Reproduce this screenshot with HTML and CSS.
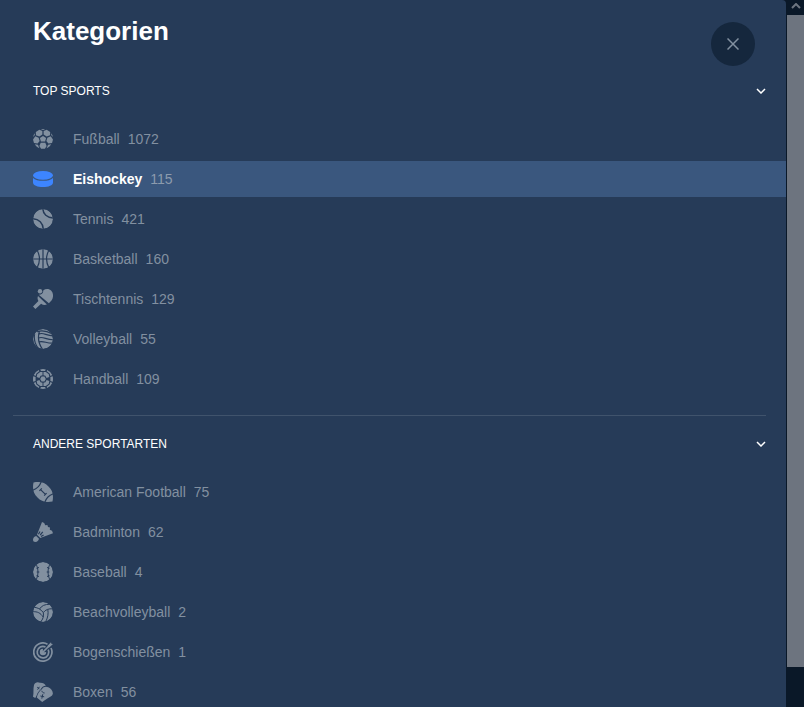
FILE: index.html
```html
<!DOCTYPE html>
<html lang="de" dir="ltr">
  <head>
    <meta charset="utf-8">
    <title>Kategorien</title>
    <link rel="stylesheet" href="styles.css">
  </head>
  <body>
    <div class="page">
      <main class="panel">
        <header class="panel-header">
          <h1>Kategorien</h1>
          <button class="close" type="button" aria-label="Schließen">
            <svg width="12" height="12" viewBox="0 0 12 12"><path d="M0.5 0.5L11.5 11.5M11.5 0.5L0.5 11.5"/></svg>
          </button>
        </header>

        <section class="group">
          <button class="group-title" type="button" aria-expanded="true">
            <span>TOP SPORTS</span>
            <svg width="10" height="6" viewBox="0 0 10 6"><path d="M1 1L5 5L9 1"/></svg>
          </button>
          <ul class="sports">
            <li>
              <a class="sport" href="#fussball">
                <svg class="icon" viewBox="0 0 20 20">
                  <path d="M10 7L13.1 9L12.1 12.6H7.9L6.9 9Z"/>
                  <path d="M6.3 0.7L9.4 2V5.4L6.3 7.6L3 6.2L2.8 3Z"/>
                  <path d="M13.7 0.7L10.6 2V5.4L13.7 7.6L17 6.2L17.2 3Z"/>
                  <path d="M2.3 7.3L5.6 8.7L6.6 12L4.6 14.4L1 13.9L0 10.4Z"/>
                  <path d="M17.7 7.3L14.4 8.7L13.4 12L15.4 14.4L19 13.9L20 10.4Z"/>
                  <path d="M7.7 13.8H12.3L13.6 17L11.9 19.8H8.1L6.4 17Z"/>
                  <path d="M1.8 15.3L4.9 15.8L6.4 19.3C4.5 18.6 2.9 17.2 1.8 15.3Z"/>
                  <path d="M18.2 15.3L15.1 15.8L13.6 19.3C15.5 18.6 17.1 17.2 18.2 15.3Z"/>
                  <path d="M1.6 4.2L1.8 6L0.2 8C0.4 6.5 0.9 5.3 1.6 4.2Z"/>
                  <path d="M18.4 4.2L18.2 6L19.8 8C19.6 6.5 19.1 5.3 18.4 4.2Z"/>
                  <path d="M7.8 0.2Q10 -0.2 12.2 0.2L10 1.1Z"/>
                </svg>
                <span class="name">Fußball</span>
                <span class="count">1072</span>
              </a>
            </li>
            <li>
              <a class="sport active" href="#eishockey" aria-current="page">
                <svg class="icon" viewBox="0 0 20 20">
                  <ellipse cx="10" cy="6.3" rx="10" ry="4.4"/>
                  <path d="M0 8.9C2 10.8 5.5 11.8 10 11.8S18 10.8 20 8.9V13.4C20 16.2 15.5 18 10 18S0 16.2 0 13.4Z"/>
                </svg>
                <span class="name">Eishockey</span>
                <span class="count">115</span>
              </a>
            </li>
            <li>
              <a class="sport" href="#tennis">
                <svg class="icon ball" viewBox="0 0 20 20">
                  <circle cx="10" cy="10" r="10"/>
                  <path class="cut" d="M9.8 -1C9.8 5 14 9 21 9"/>
                  <path class="cut" d="M-1 9.6C6 9.6 10.3 14 10.3 21"/>
                </svg>
                <span class="name">Tennis</span>
                <span class="count">421</span>
              </a>
            </li>
            <li>
              <a class="sport" href="#basketball">
                <svg class="icon ball" viewBox="0 0 20 20">
                  <circle cx="10" cy="10" r="10"/>
                  <path class="cut thin" d="M10 0V20M0 10H20M4 1C7 6.5 7 13.5 4 19M16 1C13 6.5 13 13.5 16 19"/>
                </svg>
                <span class="name">Basketball</span>
                <span class="count">160</span>
              </a>
            </li>
            <li>
              <a class="sport" href="#tischtennis">
                <svg class="icon" viewBox="0 0 20 20">
                  <circle cx="7" cy="2.2" r="2.2"/>
                  <path d="M5.8 5.8C8.5 5.8 10.3 4.2 10.4 1.2C13 -0.6 16.3 -0.3 18.3 1.8C20.6 4.3 20.5 8.4 18.7 11.2L15.9 14.2Z"/>
                  <path d="M5 7.1L13.9 15.6C11.9 16.2 9.9 16.1 8.1 14.8L2.4 20L0 17.6L5.4 12.1C4.5 10.5 4.3 8.8 5 7.1Z"/>
                </svg>
                <span class="name">Tischtennis</span>
                <span class="count">129</span>
              </a>
            </li>
            <li>
              <a class="sport" href="#volleyball">
                <svg class="icon ball" viewBox="0 0 20 20">
                  <circle cx="10" cy="10" r="10"/>
                  <path class="cut thin" d="M4 2.7C8.5 1.2 14 2 19 4.8M5.8 5.2C10 2.5 13.5 7.3 21 6.8M5.6 9C10 6.8 13.5 11.3 21 10.7M6.2 12.9C10.5 11.5 14 14.7 20 14.1M6.3 2.5C4.5 9 5.8 15.5 10 21M1.6 4.8C0.6 11 2.4 16 5.5 19.5"/>
                </svg>
                <span class="name">Volleyball</span>
                <span class="count">55</span>
              </a>
            </li>
            <li>
              <a class="sport" href="#handball">
                <svg class="icon" viewBox="0 0 20 20">
                  <path d="M8.6 7.4H11.4L12.8 10L11.4 12.6H8.6L7.2 10Z"/>
                  <path d="M7.2 2.9H9.5V6.2L7.6 6.7L6.4 9.1L3.7 8L4.2 5.2Z"/>
                  <path d="M12.8 2.9H10.5V6.2L12.4 6.7L13.6 9.1L16.3 8L15.8 5.2Z"/>
                  <path d="M7.2 17.1H9.5V13.8L7.6 13.3L6.4 10.9L3.7 12L4.2 14.8Z"/>
                  <path d="M12.8 17.1H10.5V13.8L12.4 13.3L13.6 10.9L16.3 12L15.8 14.8Z"/>
                  <path d="M7.2 0.4Q10 -0.4 12.8 0.4L12 2H8ZM7.2 19.6Q10 20.4 12.8 19.6L12 18H8Z"/>
                  <path d="M0.3 7.2Q-0.3 10 0.3 12.8L2.6 12V8ZM19.7 7.2Q20.3 10 19.7 12.8L17.4 12V8Z"/>
                  <path d="M0.8 6Q2.4 2.3 5.8 0.9L6.3 2.2L3.4 4.4L2.6 7ZM19.2 6Q17.6 2.3 14.2 0.9L13.7 2.2L16.6 4.4L17.4 7Z"/>
                  <path d="M0.8 14Q2.4 17.7 5.8 19.1L6.3 17.8L3.4 15.6L2.6 13ZM19.2 14Q17.6 17.7 14.2 19.1L13.7 17.8L16.6 15.6L17.4 13Z"/>
                </svg>
                <span class="name">Handball</span>
                <span class="count">109</span>
              </a>
            </li>
          </ul>
        </section>

        <section class="group">
          <button class="group-title" type="button" aria-expanded="true">
            <span>ANDERE SPORTARTEN</span>
            <svg width="10" height="6" viewBox="0 0 10 6"><path d="M1 1L5 5L9 1"/></svg>
          </button>
          <ul class="sports">
            <li>
              <a class="sport" href="#american-football">
                <svg class="icon" viewBox="0 0 20 20">
                  <path d="M0.5 0.5C7 -0.8 12 0.5 15.5 4.5C19.5 8 20.8 13 19.5 19.5C13 20.8 8 19.5 4.5 15.5C0.5 12 -0.8 7 0.5 0.5Z"/>
                  <path class="cut thin" d="M8.3 -0.5C7 3.5 3.5 7 -0.5 8.3M20.5 11.7C16.5 13 13 16.5 11.7 20.5M7.8 7.8L12.2 12.2M6.4 8.8L8.8 6.4M11.2 13.6L13.6 11.2"/>
                </svg>
                <span class="name">American Football</span>
                <span class="count">75</span>
              </a>
            </li>
            <li>
              <a class="sport" href="#badminton">
                <svg class="icon" viewBox="0 0 20 20">
                  <path d="M9 0L11.2 0.9L12.2 3.2L14.4 3L15 5L17 5.6L16.8 7.8L19 8.8L20 11.2L7.3 16L4 12.7Z"/>
                  <path class="cut thin" d="M5.4 12.2L7 9.5M7.2 13L9.8 9.9M8 14.6L10.6 13"/>
                  <path d="M3.2 14L6 16.8C5.6 18.7 4.2 20 2.4 20C0.9 20 0 19 0 17.7C0 15.9 1.4 14.4 3.2 14Z"/>
                </svg>
                <span class="name">Badminton</span>
                <span class="count">62</span>
              </a>
            </li>
            <li>
              <a class="sport" href="#baseball">
                <svg class="icon ball" viewBox="0 0 20 20">
                  <circle cx="10" cy="10" r="10"/>
                  <path class="cut fine" d="M3 2C5.6 7 5.6 13 3 18M17 2C14.4 7 14.4 13 17 18M3.5 6.3L6 5.5M3.7 10H6.3M3.5 13.7L6 14.5M16.5 6.3L14 5.5M16.3 10H13.7M16.5 13.7L14 14.5"/>
                </svg>
                <span class="name">Baseball</span>
                <span class="count">4</span>
              </a>
            </li>
            <li>
              <a class="sport" href="#beachvolleyball">
                <svg class="icon ball" viewBox="0 0 20 20">
                  <circle cx="10" cy="10" r="10"/>
                  <path class="cut fine" d="M10.3 10.5C7.5 7 4.5 5.3 0 5.2M10.3 10.5C12.5 7.7 15.5 6.5 20 6.8M10.3 10.5C11 14 10 17.5 7.5 20M6.5 7C8.5 3.8 12 2 17 2.4M14.8 7.5C15.6 11.5 14.8 16 12.5 20M10.2 15C7.5 11 4.5 9.4 -0.5 9.7"/>
                </svg>
                <span class="name">Beachvolleyball</span>
                <span class="count">2</span>
              </a>
            </li>
            <li>
              <a class="sport" href="#bogenschiessen">
                <svg class="icon" viewBox="0 0 20 20">
                  <path class="ring" d="M14.5 2.2A9.1 9.1 0 1 0 18 6"/>
                  <path class="ring" d="M12.5 4.9A5.8 5.8 0 1 0 15.2 7.6"/>
                  <path d="M10 6.8A3.2 3.2 0 1 0 13.2 10L10.8 10.2L9.8 9.2Z"/>
                  <path class="ring" d="M9.5 10.5L17 3"/>
                  <path d="M14.8 3.6L18 0.2L18.3 1.7L20 2L16.5 5.3L14.6 5.5Z"/>
                </svg>
                <span class="name">Bogenschießen</span>
                <span class="count">1</span>
              </a>
            </li>
            <li>
              <a class="sport" href="#boxen">
                <svg class="icon" viewBox="0 0 20 20">
                  <path d="M1 3C2 0.4 4.4 -0.4 7 0.8C9.5 0.6 12 1.8 12.8 3.8C10.5 4 8.6 5.2 7.6 7.4C5.7 9 4.3 11 3.6 13.5L2.3 16L0 14.8C0.9 11 0 7 1 3Z"/>
                  <path d="M9.1 7C10.2 4.7 13 4.1 15.3 5.3C18 6.2 20.2 9.3 19.8 12C19.3 14.3 16.5 15.2 14.3 16.5L9.2 20L3.8 15.4C4.5 12 6.2 9 9.1 7Z"/>
                  <path class="cut fine" d="M4.2 5.2L6.4 6.8M6.4 4.8L4.6 7.6M7.4 14L11.2 14.8M9.8 12.2L8.8 16.6M8.8 8.8C9.2 10.2 10.2 11 11.6 11"/>
                </svg>
                <span class="name">Boxen</span>
                <span class="count">56</span>
              </a>
            </li>
          </ul>
        </section>
      </main>

      <div class="scrollbar" aria-hidden="true">
        <div class="scroll-up">
          <svg width="10" height="6" viewBox="0 0 10 6"><path d="M1 5L5 1L9 5"/></svg>
        </div>
        <div class="scroll-thumb"></div>
      </div>
    </div>
  </body>
</html>
```
FILE: styles.css
```css
* {
  box-sizing: border-box;
}
body {
  margin: 0;
  background-color: #0a1828;
  font-family: "Liberation Sans", Arial, sans-serif;
  font-size: 14px;
  color: #ffffff;
}
.page {
  display: flex;
  height: 100vh;
  overflow: hidden;
}
.panel {
  --panel: #263b58;
  --muted: #8290a0;
  flex: 1;
  overflow: hidden;
  border-top-right-radius: 4px;
  background-color: var(--panel);
}
svg {
  display: block;
  fill: none;
}
button {
  border: 0;
  font-family: inherit;
  color: inherit;
  cursor: pointer;
}
.panel-header {
  display: flex;
  justify-content: space-between;
  padding: 16px 31px 0 33px;
}
h1 {
  margin: 0;
  font-size: 26px;
  line-height: 30px;
}
.close {
  display: flex;
  align-items: center;
  justify-content: center;
  width: 44px;
  height: 44px;
  margin-top: 6px;
  padding: 0;
  border-radius: 50%;
  background-color: #15273d;
}
.close svg {
  stroke: #8290a0;
  stroke-width: 1.5;
}
.group {
  padding-bottom: 18px;
}
.group + .group::before {
  content: "";
  display: block;
  height: 1px;
  margin: 0 20px 0 13px;
  background-color: #40536c;
}
.group-title {
  display: flex;
  align-items: center;
  justify-content: space-between;
  width: 100%;
  height: 56px;
  padding: 0 20px 0 33px;
  background: none;
  font-size: 12px;
}
.panel-header + .group .group-title {
  height: 50px;
}
.group-title svg {
  stroke: #ffffff;
  stroke-width: 1.5;
}
.sports {
  display: flex;
  flex-direction: column;
  gap: 4px;
  margin: 0;
  padding: 0;
  list-style: none;
}
.group-title + .sports {
  margin-top: 2px;
}
.panel-header + .group .sports {
  margin-top: 5px;
}
.sport {
  display: flex;
  align-items: center;
  height: 36px;
  padding: 0 33px;
  color: var(--muted);
  text-decoration: none;
}
.icon {
  width: 20px;
  height: 20px;
  margin-right: 20px;
  fill: var(--muted);
}
.ball {
  border-radius: 50%;
}
.cut {
  fill: none;
  stroke: var(--panel);
  stroke-width: 1.5;
}
.thin {
  stroke-width: 1.2;
}
.fine {
  stroke-width: 1;
}
.ring {
  fill: none;
  stroke: var(--muted);
  stroke-width: 1.7;
}
.name {
  margin-right: 8px;
}
.active {
  background-color: #3a577e;
}
.active .icon {
  fill: #3d85ff;
}
.active .name {
  font-weight: bold;
  color: #ffffff;
}
.active .count {
  color: #8c9bad;
}
.scrollbar {
  display: flex;
  flex-direction: column;
  width: 18px;
  padding: 0 0 40px 1px;
}
.scroll-up {
  display: flex;
  align-items: center;
  justify-content: center;
  height: 15px;
  padding-bottom: 3px;
}
.scroll-up svg {
  stroke: #6d7580;
  stroke-width: 2;
}
.scroll-thumb {
  flex: 1;
  background-color: #6d747f;
}
```
